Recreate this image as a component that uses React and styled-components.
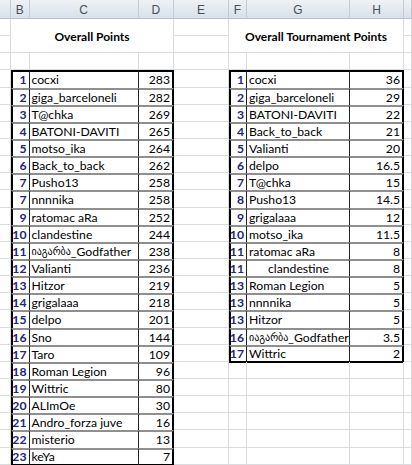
import React from 'react'
import styled, { createGlobalStyle, css } from 'styled-components'

const GlobalStyle = createGlobalStyle`
    html, body {
        margin: 0;
        padding: 0;
        background: #ffffff;
    }
    body {
        font-family: Lato, 'Open Sans', 'DejaVu Sans', sans-serif;
        -webkit-font-smoothing: antialiased;
    }
`

const COLS = ['A', 'B', 'C', 'D', 'E', 'F', 'G', 'H', 'I']

const GEO = 'იაგარბა'

const overall = [
    [1, 'cocxi', 283],
    [2, 'giga_barceloneli', 282],
    [3, 'T@chka', 269],
    [4, 'BATONI-DAVITI', 265],
    [5, 'motso_ika', 264],
    [6, 'Back_to_back', 262],
    [7, 'Pusho13', 258],
    [7, 'nnnnika', 258],
    [9, 'ratomac aRa', 252],
    [10, 'clandestine', 244],
    [11, GEO + '_Godfather', 238],
    [12, 'Valianti', 236],
    [13, 'Hitzor', 219],
    [14, 'grigalaaa', 218],
    [15, 'delpo', 201],
    [16, 'Sno', 144],
    [17, 'Taro', 109],
    [18, 'Roman Legion', 96],
    [19, 'Wittric', 80],
    [20, 'ALImOe', 30],
    [21, 'Andro_forza juve', 16],
    [22, 'misterio', 13],
    [23, 'keYa', 7],
]

const tournament = [
    [1, 'cocxi', 36],
    [2, 'giga_barceloneli', 29],
    [3, 'BATONI-DAVITI', 22],
    [4, 'Back_to_back', 21],
    [5, 'Valianti', 20],
    [6, 'delpo', 16.5],
    [7, 'T@chka', 15],
    [8, 'Pusho13', 14.5],
    [9, 'grigalaaa', 12],
    [10, 'motso_ika', 11.5],
    [11, 'ratomac aRa', 8],
    [11, 'clandestine', 8, true],
    [13, 'Roman Legion', 5],
    [13, 'nnnnika', 5],
    [13, 'Hitzor', 5],
    [16, GEO + '_Godfather', 3.5],
    [17, 'Wittric', 2],
]

const Sheet = styled.div`
    display: grid;
    grid-template-columns: 11px 18.5px 109px 35.5px 55px 18px 103px 54px 1fr;
    grid-template-rows: 19px;
    grid-auto-rows: 17.15px;
    width: 412px;
    height: 465px;
    overflow: hidden;
    font-size: 12.2px;
    color: #000;
`

const ColHead = styled.div`
    box-sizing: border-box;
    background: linear-gradient(#eef2f7, #d9e0e9);
    border-right: 1px solid #c3cbd5;
    border-bottom: 1px solid #b9c3cf;
    color: #4a4f57;
    font-family: 'Liberation Sans', Arial, sans-serif;
    font-size: 12px;
    display: flex;
    align-items: center;
    justify-content: center;
    padding-top: 1px;
`

const Cell = styled.div`
    box-sizing: border-box;
    border-right: 1px solid #dadcdf;
    border-bottom: 1px solid #dadcdf;
`

const Title = styled.div`
    grid-column: ${p => p.$col};
    grid-row: 2 / 4;
    box-sizing: border-box;
    border-right: 1px solid #dadcdf;
    border-bottom: 1px solid #dadcdf;
    display: flex;
    align-items: center;
    justify-content: center;
    font-weight: bold;
    font-size: 12px;
    padding-top: 1px;
`

const edge = css`
    box-sizing: border-box;
    display: flex;
    align-items: center;
    white-space: nowrap;
    overflow: hidden;
    border-top: ${p => (p.$first ? '2px solid #000' : '2px solid #8f8f8f')};
    border-bottom: ${p => (p.$last ? '2px solid #000' : 'none')};
    margin-bottom: ${p => (p.$last ? '-1px' : '0')};
`

const RankCell = styled.div`
    ${edge};
    justify-content: flex-end;
    padding-right: 2px;
    border-left: 2px solid #000;
    border-right: 1px solid #222;
    color: #24247f;
    font-weight: bold;
`

const NameCell = styled.div`
    ${edge};
    padding-left: ${p => (p.$indent ? '21px' : '2px')};
    border-right: 1px solid #222;
`

const Georgian = styled.span`
    font-family: 'DejaVu Sans', sans-serif;
    font-size: 10px;
`

const PointsCell = styled.div`
    ${edge};
    justify-content: flex-end;
    padding-right: 2px;
    border-right: 2px solid #000;
`

function PlayerName ({ name }) {
    if (!name.startsWith(GEO)) return name
    return <><Georgian>{GEO}</Georgian>{name.slice(GEO.length)}</>
}

function TableRow ({ row, first, last }) {
    const [rank, name, pts, indent] = row
    return (
        <>
            <RankCell $first={first} $last={last}>{rank}</RankCell>
            <NameCell $first={first} $last={last} $indent={indent}><PlayerName name={name} /></NameCell>
            <PointsCell $first={first} $last={last}>{pts}</PointsCell>
        </>
    )
}

function BlankCells ({ count, prefix }) {
    return Array.from({ length: count }, (_, i) => <Cell key={prefix + i} />)
}

function App () {
    const rows = []
    for (let i = 0; i < 23; i++) {
        const left = overall[i]
        const right = tournament[i]
        rows.push(
            <React.Fragment key={'r' + i}>
                <Cell />
                <TableRow row={left} first={i === 0} last={i === overall.length - 1} />
                <Cell />
                {right
                    ? <TableRow row={right} first={i === 0} last={i === tournament.length - 1} />
                    : <BlankCells count={3} prefix={'b' + i} />}
                <Cell />
            </React.Fragment>
        )
    }

    return (
        <>
            <GlobalStyle />
            <Sheet>
                {COLS.map(c => <ColHead key={c}>{c === 'A' || c === 'I' ? '' : c}</ColHead>)}
                <Title $col="2 / 5">Overall Points</Title>
                <Title $col="6 / 9">Overall Tournament Points</Title>
                <Cell /><Cell /><Cell />
                <Cell /><Cell /><Cell />
                {COLS.map(c => <Cell key={'e' + c} />)}
                {rows}
            </Sheet>
        </>
    )
}

export default App
